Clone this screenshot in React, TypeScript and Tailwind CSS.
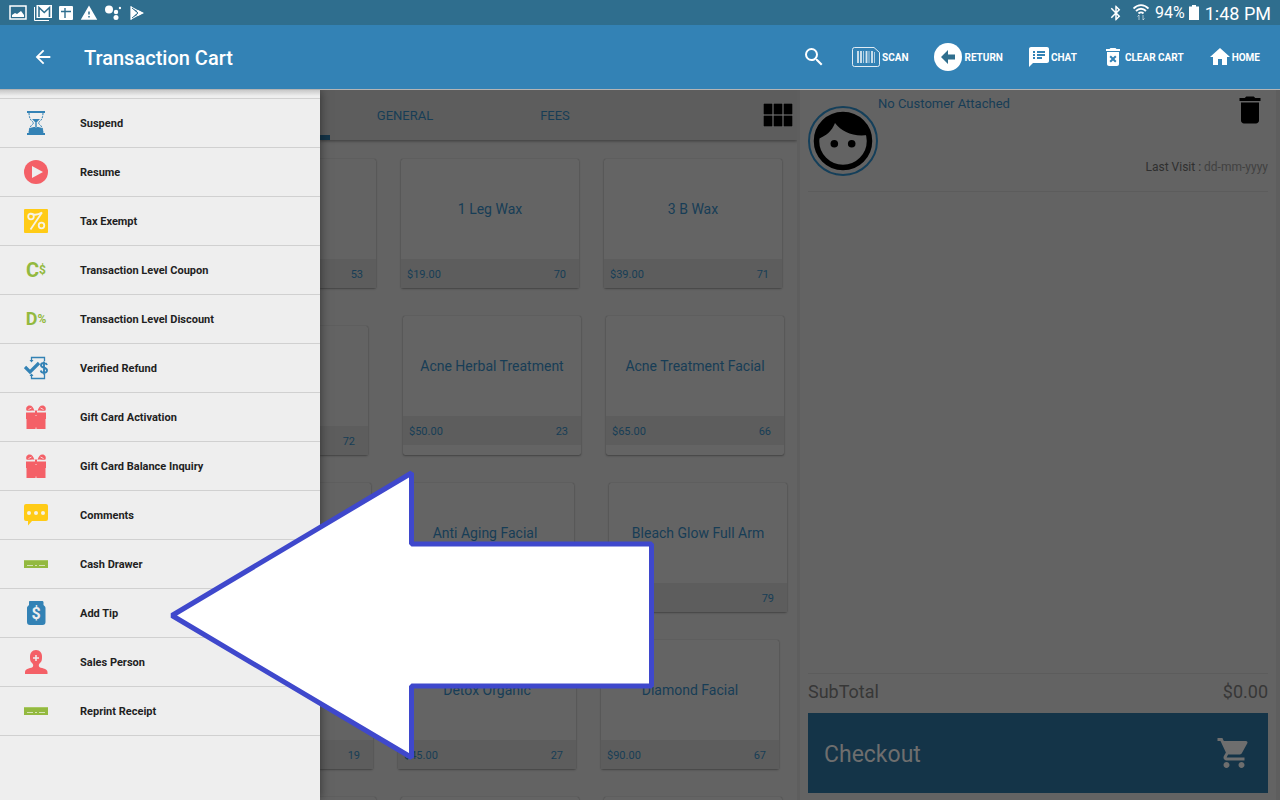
import type { ReactNode } from 'react'
import {
  MdArrowBack,
  MdBluetooth,
  MdDelete,
  MdDeleteForever,
  MdHome,
  MdSearch,
  MdShoppingCart,
  MdSpeakerNotes,
  MdWarning,
} from 'react-icons/md'

interface Product {
  name: string
  price: string
  stock: number
}

const HourglassIcon = () => (
  <svg viewBox="0 0 24 24" className="size-6" fill="#3382b5">
    <path d="M3 0h18v2H3zM3 22h18v2H3z" />
    <path d="M5 2c0 5 2 8 5 10-3 2-5 5-5 10M19 2c0 5-2 8-5 10 3 2 5 5 5 10" fill="none" stroke="#3382b5" strokeWidth="1" strokeDasharray="2 1" />
    <path d="M8 8h8l-3 3v5c3 0 6 1 6 3v4H5v-4c0-2 3-3 6-3v-5z" />
    <path d="M12 11v6" stroke="#9cc3dc" strokeWidth="1" />
  </svg>
)

const PlayIcon = () => (
  <svg viewBox="0 0 24 24" className="size-6">
    <circle cx="12" cy="12" r="12" fill="#f46067" />
    <path d="M8 6l11 6-11 6z" fill="#eee" />
  </svg>
)

const PercentIcon = () => (
  <svg viewBox="0 0 24 24" className="size-6" fill="none" stroke="#f6f3e6">
    <rect width="24" height="24" rx="1" fill="#ffcb16" stroke="none" />
    <circle cx="7" cy="7.500" r="2.800" strokeWidth="1.800" />
    <circle cx="17.500" cy="16.500" r="2.800" strokeWidth="1.800" />
    <path d="M6 4.500c4 2 8 1.500 12-1L6.500 20.500" strokeWidth="1.800" />
  </svg>
)

const CouponIcon = () => (
  <span className="flex size-6 items-center justify-center font-bold leading-none text-[#93b93f]">
    <span className="text-[20px]">C</span>
    <span className="text-[12px]">$</span>
  </span>
)

const DiscountIcon = () => (
  <span className="flex size-6 items-center justify-center font-bold leading-none text-[#93b93f]">
    <span className="text-[18px]">D</span>
    <span className="text-[12px]">%</span>
  </span>
)

const RefundIcon = () => (
  <svg viewBox="0 0 24 24" className="size-6" fill="none" stroke="#3382b5">
    <path d="M7.500 5V1.500h13V5M7.500 18v4.500h13V18" strokeWidth="1.300" />
    <path d="M5.500 4h4l-2 2.500zM5.500 20h4l-2-2.500z" fill="#3382b5" stroke="none" />
    <path d="M1 11l5 5 9-9" strokeWidth="3.200" />
    <path d="M23 9c-.5-1.500-1.500-2-3-2-2 0-3 1-3 2.300 0 3.200 6 1.700 6 5 0 1.500-1.200 2.500-3 2.500s-3-.8-3.300-2.300M20 5.500v13" strokeWidth="1.900" />
  </svg>
)

const GiftIcon = () => (
  <svg viewBox="0 0 24 24" className="size-6" fill="#f46067">
    <path d="M2 7.500h20V14H2zM2.500 13h19v11h-19z" />
    <path d="M10.500 6C8 4.500 5 6.500 2.500 5.500 1.500 3 3 .5 5.500.5c2.500 0 4 2 5 5.500zM13.500 6c2.500-1.500 5.500.5 8-.5C22.500 3 21 .5 18.500.5c-2.500 0-4 2-5 5.500z" />
    <path d="M4.500 4.500l3-1.500M19.500 4.500l-3-1.500M12 10v1M12 22.500v1.500" stroke="#f3d5d6" strokeWidth="1" />
    <path d="M11 5.500h2V8h-2z" />
  </svg>
)

const CommentIcon = () => (
  <svg viewBox="0 0 24 24" className="size-6" fill="#ffcb16">
    <path d="M2 1h20a2 2 0 012 2v13a2 2 0 01-2 2H8l-4 4.500V18H2a2 2 0 01-2-2V3a2 2 0 012-2z" />
    <g fill="#f6f3e6">
      <circle cx="5" cy="10" r="2" />
      <circle cx="12" cy="10" r="2" />
      <circle cx="19" cy="10" r="2" />
    </g>
  </svg>
)

const DrawerIcon = () => (
  <svg viewBox="0 0 24 24" className="size-6">
    <path d="M0 8h24v8H0z" fill="#93b93f" />
    <path d="M0 8.500h24" stroke="#a8c862" />
    <path d="M3 13.500h6M11 13.500h2M15 13.500h6" stroke="#d5e2b4" />
  </svg>
)

const TipIcon = () => (
  <span className="relative flex size-6 items-center justify-center">
    <svg viewBox="0 0 24 24" className="absolute inset-0 size-6" fill="#3382b5">
      <path d="M6 0h12c1 0 1.500.5 1.500 1.500V4l1.500 1.500c.4.500.5 1 .5 2V21c0 2-1 3-3 3H6c-2 0-3-1-3-3V7.500c0-1 .1-1.500.5-2L5 4V1.500C5 .5 5 0 6 0z" />
    </svg>
    <span className="relative pt-0.5 text-[16px] font-bold leading-none text-[#eee]">$</span>
  </span>
)

const PersonIcon = () => (
  <svg viewBox="0 0 24 24" className="size-6" fill="#f46067">
    <path d="M12 0c4 0 6 3 6 6.500 0 3 0 5-2 6.500-1 1-1.500 2-1 3.500 1 2 8.500 1.500 8.500 5.500v2H1v-2c0-4 7-3.500 8-5.500.5-1.500 0-2.500-1-3.500-2-1.500-2-3.500-2-6.500C6 3 8 0 12 0z" />
    <path d="M12 5v6M9 8h6" stroke="#eee" strokeWidth="1.500" />
  </svg>
)

const Avatar = () => (
  <svg viewBox="0 0 70 70" className="mt-4 size-[70px] shrink-0">
    <circle cx="35" cy="35" r="34" fill="none" stroke="#143f5a" strokeWidth="2" />
    <circle cx="35" cy="35" r="26.500" fill="none" stroke="#000" strokeWidth="5.500" />
    <path d="M10 33c8-3 14-8 17-16 7 9 18 14 33 12C58-1 12-1 10 33z" />
    <circle cx="26.300" cy="37.700" r="3.800" />
    <circle cx="43.700" cy="37.700" r="3.800" />
  </svg>
)

const menu: { label: string; icon: ReactNode }[] = [
  { label: 'Suspend', icon: <HourglassIcon /> },
  { label: 'Resume', icon: <PlayIcon /> },
  { label: 'Tax Exempt', icon: <PercentIcon /> },
  { label: 'Transaction Level Coupon', icon: <CouponIcon /> },
  { label: 'Transaction Level Discount', icon: <DiscountIcon /> },
  { label: 'Verified Refund', icon: <RefundIcon /> },
  { label: 'Gift Card Activation', icon: <GiftIcon /> },
  { label: 'Gift Card Balance Inquiry', icon: <GiftIcon /> },
  { label: 'Comments', icon: <CommentIcon /> },
  { label: 'Cash Drawer', icon: <DrawerIcon /> },
  { label: 'Add Tip', icon: <TipIcon /> },
  { label: 'Sales Person', icon: <PersonIcon /> },
  { label: 'Reprint Receipt', icon: <DrawerIcon /> },
]

// first card of every row sits half under the drawer, only its stock shows
const rows: {
  edge: string
  firstWidth: string
  firstStock: number | null
  gaps: [string, string]
  tall?: boolean
  products: Product[]
}[] = [
  {
    edge: 'pr-[15px]',
    firstWidth: 'w-[56px]',
    firstStock: 53,
    gaps: ['ml-[25px]', 'ml-[25px]'],
    products: [
      { name: '1 Leg Wax', price: '$19.00', stock: 70 },
      { name: '3 B Wax', price: '$39.00', stock: 71 },
    ],
  },
  {
    edge: 'pr-[13px]',
    firstWidth: 'w-[48px]',
    firstStock: 72,
    gaps: ['ml-[35px]', 'ml-[25px]'],
    tall: true,
    products: [
      { name: 'Acne Herbal Treatment', price: '$50.00', stock: 23 },
      { name: 'Acne Treatment Facial', price: '$65.00', stock: 66 },
    ],
  },
  {
    edge: 'pr-[10px]',
    firstWidth: 'w-[51px]',
    firstStock: null,
    gaps: ['ml-[25px]', 'ml-[35px]'],
    products: [
      { name: 'Anti Aging Facial', price: '', stock: 0 },
      { name: 'Bleach Glow Full Arm', price: '', stock: 79 },
    ],
  },
  {
    edge: 'pr-[18px]',
    firstWidth: 'w-[53px]',
    firstStock: 19,
    gaps: ['ml-[25px]', 'ml-[25px]'],
    products: [
      { name: 'Detox Organic', price: '$45.00', stock: 27 },
      { name: 'Diamond Facial', price: '$90.00', stock: 67 },
    ],
  },
  {
    edge: 'pr-[15px]',
    firstWidth: 'w-[56px]',
    firstStock: null,
    gaps: ['ml-[25px]', 'ml-[25px]'],
    products: [
      { name: '', price: '', stock: 0 },
      { name: '', price: '', stock: 0 },
    ],
  },
]

function StatusBar() {
  return (
    <div className="flex h-[25px] items-center justify-between bg-[#2f6e8e] px-[9px] text-white">
      <div className="flex items-center gap-[7px]">
        <svg viewBox="0 0 18 15" className="h-[15px] w-[18px]">
          <path d="M1 1h16v13H1z" fill="none" stroke="#fff" strokeWidth="1.500" />
          <path d="M3 12V10l3-2 2 1 4-3 3 4v2z" fill="#fff" />
        </svg>
        <svg viewBox="0 0 18 16" className="h-4 w-[18px]">
          <path d="M.5 2v13.500H15" fill="none" stroke="#fff" />
          <path d="M2.500 0H18v13H2.500z" fill="#fff" />
          <path d="M5 12V2.500l5.250 5 5.250-5V12" fill="none" stroke="#2f6e8e" strokeWidth="1.600" />
        </svg>
        <svg viewBox="0 0 14 14" className="h-3.5 w-3.5">
          <rect width="14" height="14" rx="1" fill="#fff" />
          <path d="M2 5.500h10M6 2v10" stroke="#2f6e8e" strokeWidth="1.400" />
        </svg>
        <MdWarning className="h-[18px] w-[18px]" />
        <svg viewBox="0 0 16 15" className="h-[15px] w-4" fill="#fff">
          <circle cx="4" cy="4.500" r="4" />
          <circle cx="11" cy="7" r="2.200" />
          <circle cx="11" cy="12.500" r="2.500" />
          <circle cx="15" cy="3" r="1.200" />
        </svg>
        <svg viewBox="0 0 14 14" className="ml-0.5 h-3.5 w-3.5">
          <path d="M1 1l11 6-11 6z" fill="none" stroke="#fff" strokeWidth="1.200" />
          <path d="M1 0l6 7-6 7zM8 4l6 3-6 3-2-3z" fill="#fff" />
          <path d="M2 2l6 5-6 5" fill="none" stroke="#2f6e8e" />
        </svg>
      </div>
      <div className="flex items-center">
        <MdBluetooth className="h-[18px] w-[18px]" />
        <svg viewBox="0 0 16 17" className="ml-2 h-[17px] w-4" fill="none" stroke="#fff">
          <path d="M.5 4.500C5 0 11 0 15.500 4.500M3 7c3-3 7-3 10 0M5.500 9.500c1.500-1.500 3.500-1.500 5 0" strokeWidth="1.800" />
          <path d="M6 16v-5l-1.500 1.500M10 11v5l1.500-1.500" opacity=".6" />
        </svg>
        <span className="ml-1.5 text-[16px] leading-5">94%</span>
        <svg viewBox="0 0 10 15" className="ml-1 h-[15px] w-2.5" fill="#fff">
          <path d="M3 0h4v1.500h3V15H0V1.500h3z" />
        </svg>
        <span className="ml-1.5 pt-0.5 text-[18px] leading-5">1:48 PM</span>
      </div>
    </div>
  )
}

function AppBar() {
  return (
    <header className="flex h-[65px] items-center border-b border-[#b4b4b4] bg-[#3382b5] pl-8 pr-5 text-white">
      <button aria-label="Back" className="flex"><MdArrowBack className="size-[22px]" /></button>
      <h1 className="ml-[30px] pt-0.5 text-[20px] font-medium leading-6">Transaction Cart</h1>
      <div className="ml-auto flex items-center gap-6 text-[10px] font-bold">
        <button aria-label="Search"><MdSearch className="size-6" /></button>
        <button className="flex items-center">
          <span className="flex w-8 justify-center">
            <svg viewBox="0 0 28 20" className="h-5 w-7" fill="none" stroke="#fff">
              <path d="M2.500.5h19.500l5.500 5v12a2 2 0 01-2 2h-23a2 2 0 01-2-2v-15a2 2 0 012-2z" opacity=".85" />
              <path d="M6 4v12M9 4v12M14.500 4v12M20 4v12" strokeWidth="1.800" opacity=".8" />
              <path d="M11.500 4v12M17 4v12M22.500 5v11" opacity=".6" />
            </svg>
          </span>
          SCAN
        </button>
        <button className="flex items-center">
          <span className="flex w-8 justify-center">
            <svg viewBox="0 0 28 28" className="size-7">
              <circle cx="14" cy="14" r="14" fill="#fff" />
              <path d="M7 14l7-7v4.500h7v5h-7V21z" fill="#2f6e8e" />
            </svg>
          </span>
          RETURN
        </button>
        <button className="flex items-center"><MdSpeakerNotes className="size-6" />CHAT</button>
        <button className="flex items-center"><MdDeleteForever className="size-6" />CLEAR CART</button>
        <button className="flex items-center"><MdHome className="size-6" />HOME</button>
      </div>
    </header>
  )
}

function Drawer() {
  return (
    <nav className="z-10 w-80 shrink-0 bg-[linear-gradient(#c8c8c8,#eee_6px)] pt-2 shadow-[0_0_10px_rgba(0,0,0,0.5)]">
      <ul className="border-t border-[#d0d0d0]">
        {menu.map((item) => (
          <li key={item.label} className="border-b border-[#d0d0d0]">
            <button className="flex h-12 w-full items-center gap-8 pl-6 text-left text-[11px] font-bold text-[#1f1f1f]">
              {item.icon}
              <span className="pt-0.5">{item.label}</span>
            </button>
          </li>
        ))}
      </ul>
    </nav>
  )
}

function Catalog() {
  return (
    <section className="flex min-w-0 flex-1 flex-col bg-[#636363] text-[#173d56]">
      <div className="flex h-[50px] shrink-0 items-center bg-[#5d5d5d] pr-1 text-[13px] shadow-[0_1px_3px_rgba(0,0,0,0.4)]">
        <span className="h-full w-2.5 border-b-[5px] border-[#143448]" />
        <button className="w-[150px] pt-0.5">GENERAL</button>
        <button className="w-[150px] pt-0.5">FEES</button>
        <button aria-label="Grid view" className="ml-auto">
          <svg viewBox="0 0 30 24" className="h-6 w-[30px]">
            <path d="M1 1h8v10H1zM11 1h8v10h-8zM21 1h8v10h-8zM1 13h8v10H1zM11 13h8v10h-8zM21 13h8v10h-8z" fill="#000" stroke="#000" strokeWidth=".6" />
          </svg>
        </button>
      </div>
      <div className="flex flex-col gap-7 pt-[19px]">
        {rows.map((row, i) => (
          <div key={i} className={`flex items-end ${row.edge}`}>
            <div className={`shrink-0 rounded-r-xs shadow-[0_0_1px_rgba(0,0,0,0.3),0_1px_2px_rgba(0,0,0,0.3)] ${row.firstWidth}`}>
              <div className="h-[100px]" />
              <div className="flex h-[29px] items-center justify-end bg-[#5d5d5d] pr-[13px] pt-1 text-[11px]">
                {row.firstStock}
              </div>
            </div>
            {row.products.map((p, j) => (
              <article
                key={j}
                className={`min-w-0 flex-1 rounded-xs bg-[#646464] shadow-[0_0_1px_rgba(0,0,0,0.3),0_1px_2px_rgba(0,0,0,0.3)] ${row.gaps[j]} ${row.tall ? 'pb-2.5' : ''}`}
              >
                <h2 className="flex h-[100px] items-center justify-center text-[14px]">{p.name}</h2>
                <div className="flex h-[29px] items-center justify-between bg-[#5d5d5d] pl-1.5 pr-[13px] pt-1 text-[11px]">
                  <span>{p.price}</span>
                  <span>{p.stock || ''}</span>
                </div>
              </article>
            ))}
          </div>
        ))}
      </div>
    </section>
  )
}

function Cart() {
  return (
    <aside className="flex w-[483px] shrink-0 border-l-[3px] border-r-4 border-[#5e5e5e] bg-[#636363]">
      <div className="flex flex-1 flex-col px-2 pb-[7px]">
        <div className="flex h-[102px] border-b border-[#5c5c5c]">
          <Avatar />
          <p className="mt-1 text-[13px] leading-5 text-[#173d56]">No Customer Attached</p>
          <div className="ml-auto flex flex-col items-end justify-between pb-4">
            <button aria-label="Delete" className="pt-0.5 text-black"><MdDelete className="size-9" /></button>
            <p className="text-[12px] leading-4 text-[#414141]">
              <span className="text-[#2f2f2f]">Last Visit : </span>dd-mm-yyyy
            </p>
          </div>
        </div>
        <div className="mt-auto flex h-10 items-center justify-between border-t border-[#5c5c5c] pb-1 text-[18px] text-[#373737]">
          <span>SubTotal</span>
          <span>$0.00</span>
        </div>
        <button className="flex h-20 items-center justify-between bg-[#143448] px-4 text-[23px] text-[#6e6e6e]">
          <span className="pt-1">Checkout</span>
          <MdShoppingCart className="size-9" />
        </button>
      </div>
    </aside>
  )
}

export default function App() {
  return (
    <div className="relative flex h-screen flex-col overflow-hidden font-[Roboto,sans-serif]">
      <StatusBar />
      <AppBar />
      <main className="flex min-h-0 flex-1 overflow-hidden">
        <Drawer />
        <Catalog />
        <Cart />
      </main>
      {/* callout pointing at Add Tip */}
      <svg viewBox="0 0 486 292" className="pointer-events-none absolute left-[168px] top-[469px] z-20 h-[292px] w-[486px]">
        <path d="M4 146.500L243.500 4v71h240v142h-240v71.500z" fill="#fff" stroke="#3f48cc" strokeWidth="5" strokeLinejoin="bevel" />
      </svg>
    </div>
  )
}
